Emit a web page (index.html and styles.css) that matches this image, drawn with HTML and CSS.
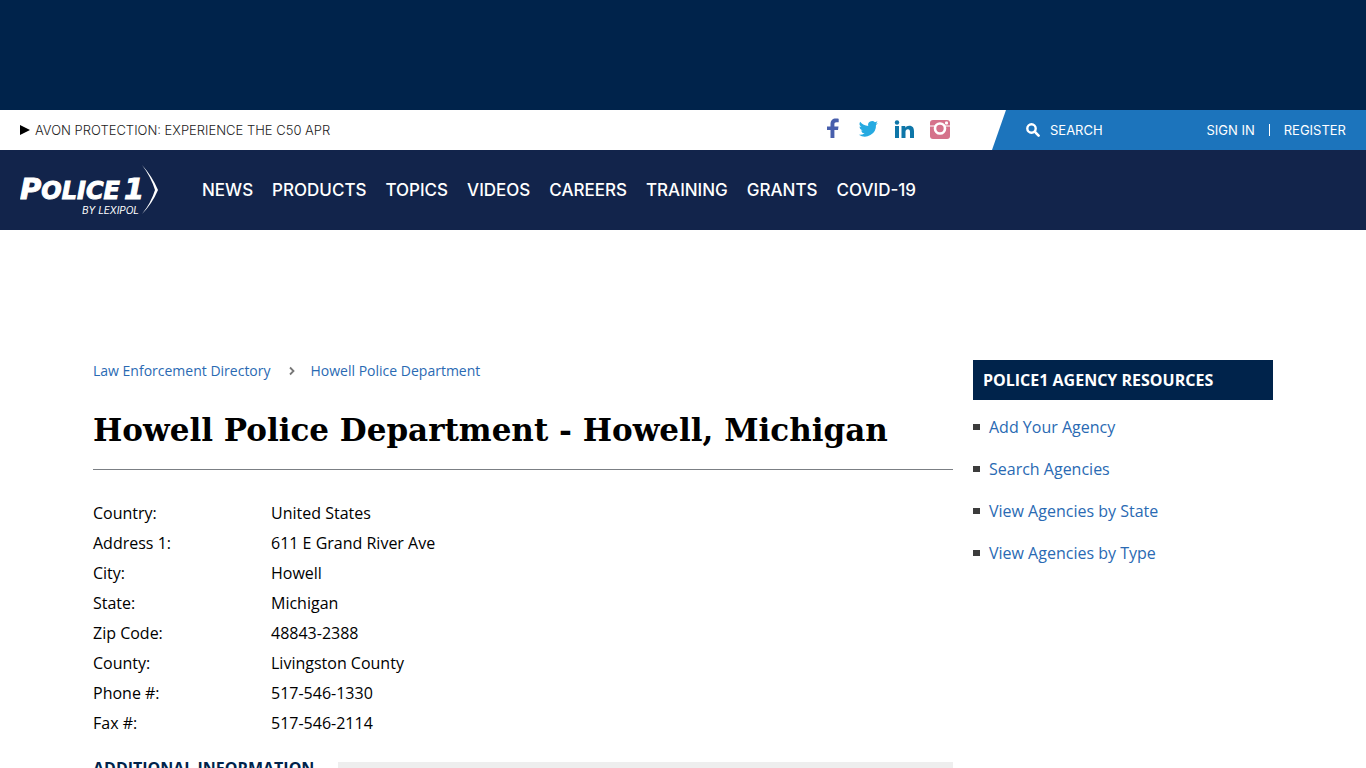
FILE: index.html
```html
<!DOCTYPE html>
<html lang="en">
<head>
<meta charset="utf-8">
<meta name="viewport" content="width=device-width, initial-scale=1">
<title>Howell Police Department - Howell, Michigan</title>
<link rel="stylesheet" href="styles.css">
</head>
<body>
<div class="banner"></div>
<header>
  <div class="topbar">
    <a class="promo" href="#"><svg width="10" height="10" viewBox="0 0 10 10" aria-hidden="true"><path d="M0 0L10 5L0 10Z"/></svg>AVON PROTECTION: EXPERIENCE THE C50 APR</a>
    <div class="social">
      <a href="#" aria-label="Facebook"><svg width="20" height="20" viewBox="0 0 20 20"><path fill="#485fac" d="M8.500 18V10H5V6.500H8.500V4.500C8.500.4 10.600-1.500 13.800-1.500C15.200-1.500 16.400-1.400 16.700-1.300V2.200H14.600C12.800 2.200 12.400 3 12.400 4.200V6.500H16.500L16 10H12.400V18Z"/></svg></a>
      <a href="#" aria-label="Twitter"><svg width="20" height="20" viewBox="-1 1 25 25"><path fill="#26aae1" d="M24 4.600a10 10 0 0 1-2.800.8 4.900 4.900 0 0 0 2.100-2.700c-.9.600-2 1-3.100 1.200a4.900 4.900 0 0 0-8.400 4.500A14 14 0 0 1 1.700 3.200a4.900 4.900 0 0 0 1.500 6.500c-.8 0-1.600-.2-2.200-.6v.1a4.900 4.900 0 0 0 3.900 4.800c-.7.200-1.500.2-2.200.1a4.900 4.900 0 0 0 4.600 3.400A9.900 9.900 0 0 1 0 19.500a14 14 0 0 0 21.500-12.400A10 10 0 0 0 24 4.600Z"/></svg></a>
      <a href="#" aria-label="LinkedIn"><svg width="20" height="20" viewBox="0 0 20 20"><path fill="#0e76a8" d="M1 6H5V18H1ZM7.500 6H11.300V7.800C12 6.500 13.400 5.700 15.200 5.700C19 5.700 20 8 20 11.500V18H16V12.300C16 10.500 15.800 9.200 13.900 9.200C12 9.200 11.500 10.500 11.500 12.300V18H7.500Z"/><circle cx="3" cy="2.500" r="2.200" fill="#0e76a8"/></svg></a>
      <a href="#" aria-label="Instagram"><svg width="20" height="20" viewBox="0 0 20 20"><rect width="20" height="19" rx="3" fill="#d5728b"/><path stroke="#fff" stroke-width="1" d="M0 6H5M15 6H20"/><circle cx="10" cy="8.500" r="5" fill="none" stroke="#fff" stroke-width="2.600"/><rect x="15" y="1.500" width="3" height="3" rx="1" fill="#fff"/></svg></a>
    </div>
    <div class="account">
      <button class="search" type="button"><svg width="14" height="14" viewBox="0 0 14 14" aria-hidden="true"><circle cx="5.500" cy="5.500" r="4.200" fill="none" stroke="#fff" stroke-width="2.400"/><path d="M8.700 8.700L12.600 12.600" stroke="#fff" stroke-width="2.600" stroke-linecap="round"/></svg>SEARCH</button>
      <div class="login"><a href="#">SIGN IN</a><a href="#">REGISTER</a></div>
    </div>
  </div>
  <div class="mainbar">
    <a class="logo" href="#" aria-label="Police1 by Lexipol">
      <svg width="140" height="50" viewBox="0 0 140 50">
        <text class="logo-name" x="0" y="34"><tspan class="logo-cap">P</tspan>OLICE</text>
        <text class="logo-one" x="104" y="34">1</text>
        <text class="logo-sub" x="62" y="49">BY LEXIPOL</text>
        <path fill="#fff" d="M122 0Q132 11 138 25Q132 39 122 49Q131 38 135 25Q131 12 122 0Z"/>
      </svg>
    </a>
    <nav class="menu">
      <a href="#">NEWS</a><a href="#">PRODUCTS</a><a href="#">TOPICS</a><a href="#">VIDEOS</a><a href="#">CAREERS</a><a href="#">TRAINING</a><a href="#">GRANTS</a><a href="#">COVID-19</a>
    </nav>
  </div>
</header>
<div class="page">
  <main class="content">
    <nav class="crumbs">
      <a href="#">Law Enforcement Directory</a>
      <svg width="6" height="10" viewBox="0 0 6 10" aria-hidden="true"><path d="M1 1.500L4.500 5L1 8.500" fill="none" stroke="#777" stroke-width="1.800"/></svg>
      <a href="#">Howell Police Department</a>
    </nav>
    <h1>Howell Police Department - Howell, Michigan</h1>
    <dl class="details">
      <dt>Country:</dt><dd>United States</dd>
      <dt>Address 1:</dt><dd>611 E Grand River Ave</dd>
      <dt>City:</dt><dd>Howell</dd>
      <dt>State:</dt><dd>Michigan</dd>
      <dt>Zip Code:</dt><dd>48843-2388</dd>
      <dt>County:</dt><dd>Livingston County</dd>
      <dt>Phone #:</dt><dd>517-546-1330</dd>
      <dt>Fax #:</dt><dd>517-546-2114</dd>
    </dl>
    <h2>ADDITIONAL INFORMATION</h2>
  </main>
  <aside class="sidebar">
    <h3>POLICE1 AGENCY RESOURCES</h3>
    <ul>
      <li><a href="#">Add Your Agency</a></li>
      <li><a href="#">Search Agencies</a></li>
      <li><a href="#">View Agencies by State</a></li>
      <li><a href="#">View Agencies by Type</a></li>
    </ul>
  </aside>
</div>
</body>
</html>
```
FILE: styles.css
```css
* { box-sizing: border-box; }
html { overflow: hidden; }
body {
  margin: 0;
  height: 100vh;
  overflow: hidden;
  background: #fff;
  color: #000;
  font: 16px/30px "Open Sans", sans-serif;
}
a { color: #2a6ab3; text-decoration: none; }
.banner { height: 110px; background: #00234b; }

.topbar {
  display: flex;
  align-items: center;
  height: 40px;
  padding-left: 20px;
  font: 13px/40px Inter, sans-serif;
}
.promo {
  display: flex;
  flex: 1;
  align-items: center;
  gap: 5px;
  color: #222;
  font-weight: 300;
}
.promo svg { fill: #000; }
.social { display: flex; gap: 16px; margin-right: 42px; }
.social a { display: flex; }
.social svg { overflow: visible; }
.account {
  display: flex;
  align-items: center;
  justify-content: space-between;
  width: 374px;
  height: 40px;
  padding: 0 20px 0 34px;
  background: #1c74bc;
  clip-path: polygon(14px 0, 100% 0, 100% 100%, 0 100%);
}
.search {
  display: flex;
  align-items: center;
  gap: 10px;
  padding: 0;
  border: 0;
  background: none;
  color: #fff;
  font: inherit;
}
.login { display: flex; align-items: center; line-height: 12px; }
.login a { color: #fff; }
.login a + a { margin-left: 14px; padding-left: 14px; border-left: 1px solid #fff; }

.mainbar {
  display: flex;
  align-items: center;
  gap: 42px;
  height: 80px;
  padding: 0 20px;
  background: #12244b;
}
.logo { display: flex; }
.logo text { fill: #fff; font-family: "DejaVu Sans", sans-serif; font-style: italic; }
.logo .logo-name { font-size: 24px; font-weight: 700; stroke: #fff; stroke-width: 1px; }
.logo .logo-cap { font-size: 29px; }
.logo .logo-one { font-size: 29px; font-weight: 700; stroke: #fff; stroke-width: 1px; }
.logo .logo-sub { font-family: Inter, sans-serif; font-size: 10px; }
.menu { display: flex; gap: 19px; font: 500 17px/24px Inter, sans-serif; }
.menu a { color: #fff; }

.page {
  display: flex;
  gap: 20px;
  max-width: 1180px;
  margin: 130px auto 0;
}
.content { flex: 1; }
.crumbs { display: flex; align-items: center; font-size: 14px; line-height: 22px; }
.crumbs svg { margin: 0 16px 0 18px; }
h1 {
  margin: 20px 0 28px;
  padding-bottom: 11px;
  border-bottom: 1px solid #7b7f84;
  font: bold 31px/56px "DejaVu Serif", serif;
}
.details {
  display: grid;
  grid-template-columns: 178px 1fr;
  margin: 0 0 18px;
}
.details dd { margin: 0; }
h2 {
  display: flex;
  gap: 24px;
  margin: 0;
  color: #00234b;
  font-size: 16px;
  line-height: 24px;
}
h2::after { content: ""; flex: 1; height: 12px; margin-top: 6px; background: #eee; }
.sidebar { width: 300px; }
.sidebar h3 {
  margin: 0 0 6px;
  padding: 0 10px;
  background: #00234b;
  color: #fff;
  font-size: 16px;
  line-height: 40px;
}
.sidebar ul { margin: 0; padding: 0; list-style: none; }
.sidebar li { display: flex; align-items: center; gap: 9px; line-height: 42px; }
.sidebar li::before { content: ""; width: 7px; height: 6px; background: #3c3c3c; }
```
